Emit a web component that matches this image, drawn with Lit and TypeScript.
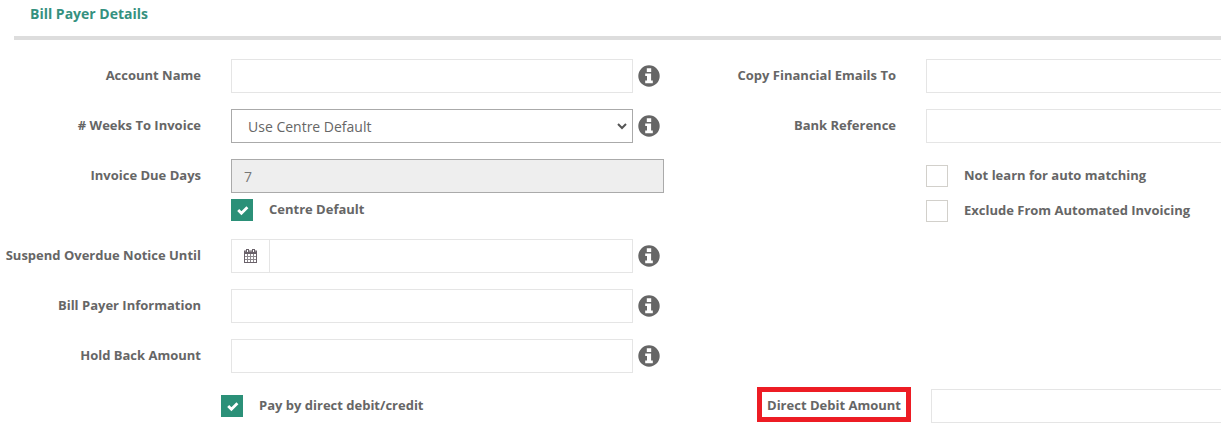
import { LitElement, html, css, svg } from "lit";
import { customElement } from "lit/decorators.js";

const infoIcon = html`<svg class="info" viewBox="0 0 22 22" aria-hidden="true"><path fill-rule="evenodd" d="M11 .3a10.700 10.700 0 1 1 0 21.400a10.700 10.700 0 0 1 0-21.400ZM8.800 3.300v3.600h4.400V3.300ZM7.200 8.600v2.500h1.800v4.500H7.200v2.700h7.600v-2.700h-1.700V8.600Z"/></svg>`;
const check = html`<svg viewBox="0 0 22 22" class="tick" aria-hidden="true"><path d="M7.200 11l3.200 3.200 6-6" fill="none" stroke="#fff" stroke-width="2.800"/></svg>`;
const calendar = html`<svg class="cal" viewBox="0 0 13 14" aria-hidden="true">${svg`
  <rect x=".5" y="2" width="12" height="11.500" fill="#fff" stroke="#6a626a"/>
  <rect x="1" y="2.500" width="11" height="2.500" fill="#6a626a"/>
  <path d="M3.500 5v8M6.500 5v8M9.500 5v8M1 7.500h11M1 10.500h11" stroke="#8d888d" fill="none"/>
  <rect x="2.500" y=".5" width="2" height="3" fill="#fff" stroke="#6a626a" stroke-width="1"/>
  <rect x="8.500" y=".5" width="2" height="3" fill="#fff" stroke="#6a626a" stroke-width="1"/>
`}</svg>`;

@customElement("app-root")
export class AppRoot extends LitElement {
  static styles = css`
    :host {
      display: block;
      width: 100%;
      height: 437px;
      overflow: hidden;
      background: #fff;
      font-family: "Open Sans", sans-serif;
      font-size: 13px;
      color: #666;
    }
    * { box-sizing: border-box; }
    .head {
      margin-left: 14px;
      height: 40px;
      padding: 4px 0 0 16px;
      border-bottom: 4px solid #ddd;
      font-size: 14px;
      font-weight: 700;
      line-height: 20px;
      color: #35917f;
    }
    .columns {
      display: grid;
      grid-template-columns: 664px 1fr;
      padding-top: 19px;
      height: 347px;
    }
    .row {
      display: grid;
      grid-template-columns: 201px 402px 1fr;
      column-gap: 30px;
      align-items: center;
      height: 34px;
      margin-bottom: 16px;
    }
    .row .info { margin-left: -25px; }
    .row.wide { grid-template-columns: 201px 433px; margin-bottom: 6px; }
    .right .row { grid-template-columns: 232px 400px; }
    .lbl {
      font-weight: 700;
      text-align: right;
      line-height: 18px;
      margin-top: -2px;
      white-space: nowrap;
    }
    .field {
      width: 100%;
      height: 34px;
      border: 1px solid #e5e5e5;
      background: #fff;
      font: 14px "Open Sans", sans-serif;
      color: #777;
      padding: 0 12px;
      outline: none;
    }
    select.field {
      appearance: none;
      border: 1px solid #aaa;
      padding: 0 0 0 16px;
      color: #666;
      background: #fff url("data:image/svg+xml,%3Csvg xmlns='http://www.w3.org/2000/svg' width='10' height='7'%3E%3Cpath d='M1 1l4 4 4-4' fill='none' stroke='%23555' stroke-width='2'/%3E%3C/svg%3E") no-repeat right 5px center;
    }
    .field[disabled] {
      background: #eee;
      border-color: #aaa;
    }
    .info { width: 22px; height: 22px; fill: #666; display: block; }
    .group { display: flex; height: 34px; }
    .addon {
      flex: 0 0 38px;
      display: flex;
      align-items: center;
      justify-content: center;
      border: 1px solid #e5e5e5;
      border-right: 0;
    }
    .cal { width: 13px; height: 14px; display: block; margin-top: -1px; }
    .check {
      display: flex;
      align-items: center;
      gap: 16px;
      font-weight: 700;
      line-height: 18px;
    }
    .check span { margin-top: -3px; }
    .box {
      flex: 0 0 22px;
      width: 22px;
      height: 22px;
      border: 1px solid #d2d0cb;
      background: #fff;
    }
    .box.on { background: #2b9078; border: 0; }
    .tick { display: block; width: 22px; height: 22px; }
    .centre { margin-left: 231px; height: 22px; margin-bottom: 18px; }
    .right .row:nth-child(2) { margin-bottom: 22px; }
    .right .check { margin-left: 262px; margin-bottom: 13px; }
    .bottom {
      display: flex;
      align-items: flex-start;
    }
    .bottom .check { margin: 8px 0 0 221px; flex: 0 0 536px; }
    .flag {
      flex: 0 0 154px;
      height: 35px;
      border: 5px solid #ed1c24;
      font-weight: 700;
      text-align: center;
      line-height: 26px;
      white-space: nowrap;
      margin-right: 20px;
    }
    .bottom .field { margin-top: 2px; flex: 0 0 400px; width: 400px; }
  `;

  render() {
    return html`
      <div class="head">Bill Payer Details</div>
      <div class="columns">
        <div class="left">
          <div class="row">
            <div class="lbl">Account Name</div>
            <input class="field" />
            ${infoIcon}
          </div>
          <div class="row">
            <div class="lbl"># Weeks To Invoice</div>
            <select class="field"><option>Use Centre Default</option></select>
            ${infoIcon}
          </div>
          <div class="row wide">
            <div class="lbl">Invoice Due Days</div>
            <input class="field" disabled value="7" />
          </div>
          <div class="check centre">
            <div class="box on">${check}</div><span>Centre Default</span>
          </div>
          <div class="row">
            <div class="lbl">Suspend Overdue Notice Until</div>
            <div class="group">
              <div class="addon">${calendar}</div>
              <input class="field" />
            </div>
            ${infoIcon}
          </div>
          <div class="row">
            <div class="lbl">Bill Payer Information</div>
            <input class="field" />
            ${infoIcon}
          </div>
          <div class="row">
            <div class="lbl">Hold Back Amount</div>
            <input class="field" />
            ${infoIcon}
          </div>
        </div>
        <div class="right">
          <div class="row">
            <div class="lbl">Copy Financial Emails To</div>
            <input class="field" />
          </div>
          <div class="row">
            <div class="lbl">Bank Reference</div>
            <input class="field" />
          </div>
          <div class="check"><div class="box"></div><span>Not learn for auto matching</span></div>
          <div class="check"><div class="box"></div><span>Exclude From Automated Invoicing</span></div>
        </div>
      </div>
      <div class="bottom">
        <div class="check">
          <div class="box on">${check}</div><span>Pay by direct debit/credit</span>
        </div>
        <div class="flag">Direct Debit Amount</div>
        <input class="field" />
      </div>
    `;
  }
}
